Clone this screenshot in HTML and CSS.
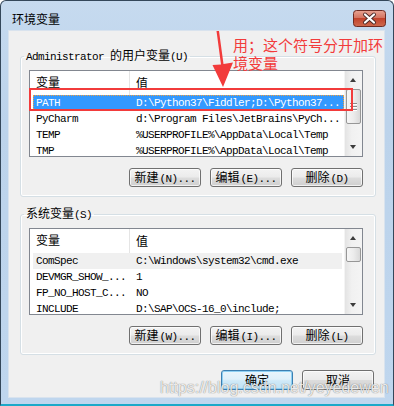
FILE: index.html
```html
<!DOCTYPE html>
<html lang="zh-CN">
<head>
    <meta charset="UTF-8">
    <title>环境变量</title>
    <link rel="stylesheet" href="styles.css">
</head>
<body>

    <div class="window">
        <!-- title bar -->
        <div class="titlebar">
            <span class="title">环境变量</span>
            <button class="close">
                <svg width="33" height="17" viewBox="0 0 33 17">
                    <defs>
                        <linearGradient id="closeBg" x1="0" y1="0" x2="0" y2="1">
                            <stop offset="0" stop-color="#e8a493"/>
                            <stop offset="0.5" stop-color="#d26f5c"/>
                            <stop offset="0.5" stop-color="#c2432c"/>
                            <stop offset="1" stop-color="#cf6a4e"/>
                        </linearGradient>
                    </defs>
                    <rect x="0.5" y="0.5" width="32" height="16" rx="3" fill="url(#closeBg)" stroke="#6d2b22"/>
                    <path d="M12 4.5 L21 12.5 M21 4.5 L12 12.5" stroke="#4a2a28" stroke-width="4" stroke-linecap="round"/>
                    <path d="M12 4.5 L21 12.5 M21 4.5 L12 12.5" stroke="#ffffff" stroke-width="2.2" stroke-linecap="round"/>
                </svg>
            </button>
        </div>

        <div class="client">
            <!-- user variables -->
            <fieldset class="group">
                <legend><span class="mono">Administrator </span>的用户变量<span class="mono">(U)</span></legend>
                <div class="list">
                    <div class="list-body">
                        <div class="list-head"><span class="col-name">变量</span><span class="col-value">值</span></div>
                        <div class="row selected"><span class="col-name">PATH</span><span class="col-value">D:\Python37\Fiddler;D:\Python37...</span></div>
                        <div class="row"><span class="col-name">PyCharm</span><span class="col-value">d:\Program Files\JetBrains\PyCh...</span></div>
                        <div class="row"><span class="col-name">TEMP</span><span class="col-value">%USERPROFILE%\AppData\Local\Temp</span></div>
                        <div class="row"><span class="col-name">TMP</span><span class="col-value">%USERPROFILE%\AppData\Local\Temp</span></div>
                    </div>
                    <div class="scrollbar">
                        <span class="arrow up"></span>
                        <span class="track"><span class="thumb big"><i></i><i></i><i></i></span></span>
                        <span class="arrow down"></span>
                    </div>
                </div>
                <div class="buttons">
                    <button class="btn">新建<span class="mono">(N)...</span></button>
                    <button class="btn">编辑<span class="mono">(E)...</span></button>
                    <button class="btn">删除<span class="mono">(D)</span></button>
                </div>
            </fieldset>

            <!-- system variables -->
            <fieldset class="group second">
                <legend>系统变量<span class="mono">(S)</span></legend>
                <div class="list">
                    <div class="list-body">
                        <div class="list-head"><span class="col-name">变量</span><span class="col-value">值</span></div>
                        <div class="row inactive"><span class="col-name">ComSpec</span><span class="col-value">C:\Windows\system32\cmd.exe</span></div>
                        <div class="row"><span class="col-name">DEVMGR_SHOW_...</span><span class="col-value">1</span></div>
                        <div class="row"><span class="col-name">FP_NO_HOST_C...</span><span class="col-value">NO</span></div>
                        <div class="row"><span class="col-name">INCLUDE</span><span class="col-value">D:\SAP\OCS-16_0\include;</span></div>
                    </div>
                    <div class="scrollbar">
                        <span class="arrow up"></span>
                        <span class="track"><span class="thumb small"></span></span>
                        <span class="arrow down"></span>
                    </div>
                </div>
                <div class="buttons">
                    <button class="btn">新建<span class="mono">(W)...</span></button>
                    <button class="btn">编辑<span class="mono">(I)...</span></button>
                    <button class="btn">删除<span class="mono">(L)</span></button>
                </div>
            </fieldset>

            <div class="dialog-actions">
                <button class="btn default">确定</button>
                <button class="btn">取消</button>
            </div>
        </div>

        <!-- red annotation drawn over the screenshot -->
        <svg class="markup" width="394" height="406" viewBox="0 0 394 406">
            <rect x="30" y="89" width="322" height="21" fill="none" stroke="#f23b3b" stroke-width="2"/>
            <path d="M216.5 31 L219 31 L223.5 64 L233 62.5 L223 87 L212.5 65 L221 64.5 Z" fill="#f23b3b"/>
        </svg>
        <div class="note">用；这个符号分开加环境变量</div>
        <div class="watermark">https://blog.csdn.net/yeyedewen</div>
    </div>

</body>
</html>
```

FILE: styles.css
```css
body { margin: 0; font-family: "Noto Sans CJK SC", sans-serif; font-size: 12px; color: #000; }
.mono { font-family: "Liberation Mono", "Noto Sans CJK SC", monospace; font-size: 11px; letter-spacing: -0.6px; }

.window { position: relative; width: 394px; height: 406px; box-sizing: border-box; padding: 0 8px 6px 7px; border: 1px solid #34475a; border-bottom: 2px solid #1ca9c9; border-radius: 6px 6px 0 0; background: linear-gradient(#c6daef, #bcd3eb 30%, #bfd6ee); display: flex; flex-direction: column; }

.titlebar { height: 29px; display: flex; justify-content: space-between; align-items: flex-start; }
.title { margin: 10px 0 0 4px; line-height: 16px; font-size: 12px; color: #000; }
.close { margin: 9px -1px 0 0; padding: 0; border: 0; background: none; width: 33px; height: 17px; display: block; }
.close svg { display: block; }

.client { height: 368px; background: #f0f0f0; display: flex; flex-direction: column; box-shadow: inset 0 0 0 1px #d9e3ee; }

.group { margin: 18px 9px 0 12px; padding: 6px 12px 9px 8px; border: 1px solid #d5dfe5; border-radius: 3px; box-shadow: inset 0 0 0 1px #fff; }
.group.second { margin-top: 9px; }
.group legend { padding: 0 2px; margin-left: -5px; line-height: 14px; font-size: 12px; }

.list { width: 334px; height: 87px; box-sizing: border-box; border: 1px solid #828790; background: #fff; display: flex; overflow: hidden; }
.list-body { flex: 1; overflow: hidden; }
.list-head { height: 24px; display: flex; align-items: center; }
.list-head .col-name { width: 93px; padding-left: 6px; border-right: 1px solid #e5e5e5; height: 24px; line-height: 22px; }
.list-head .col-value { padding-left: 6px; line-height: 22px; }

.row { height: 16px; line-height: 16px; margin: 0 2px 0 3px; padding-left: 3px; display: flex; white-space: nowrap; font-family: "Liberation Mono", monospace; font-size: 11px; letter-spacing: -0.6px; box-sizing: border-box; }
.row .col-name { width: 100px; flex: none; }
.row.selected { background: #3399ff; color: #fff; border: 1px dotted #f0a040; margin-right: 0; padding-left: 2px; line-height: 14px; }
.row.inactive { background: #f0f0f0; }

.scrollbar { width: 17px; flex: none; display: flex; flex-direction: column; background: linear-gradient(to right, #e3e3e3, #f1f1f1 40%, #f4f4f4); border-left: 1px solid #f4f4f4; }
.arrow { height: 17px; flex: none; position: relative; }
.arrow::after { content: ""; position: absolute; left: 5px; top: 7px; border-left: 3.5px solid transparent; border-right: 3.5px solid transparent; }
.arrow.up::after { border-bottom: 4px solid #3c3c3c; }
.arrow.down::after { border-top: 4px solid #3c3c3c; top: 6px; }
.track { flex: 1; padding-top: 1px; }
.thumb { display: flex; flex-direction: column; justify-content: center; align-items: center; gap: 2px; margin: 0 1px; box-sizing: border-box; border: 1px solid #979797; border-radius: 2px; background: linear-gradient(to right, #f6f6f6, #ececec 50%, #d9d9d9); }
.thumb.big { height: 35px; }
.thumb.small { height: 15px; }
.thumb i { display: block; width: 7px; height: 1px; background: #8a8a8a; box-shadow: 0 1px 0 #fff; }

.buttons { margin-top: 11px; display: flex; justify-content: flex-end; gap: 9px; padding-right: 0; }
.btn { width: 72px; height: 19px; padding: 0; box-sizing: border-box; border: 1px solid #707070; border-radius: 3px; background: linear-gradient(#f3f3f3, #ebebeb 48%, #dddddd 52%, #cfcfcf); box-shadow: inset 0 0 0 1px rgba(255, 255, 255, 0.7); font-family: "Noto Sans CJK SC", sans-serif; font-size: 12px; line-height: 16px; color: #000; }
.btn .mono { margin-left: 1px; }

.dialog-actions { margin-top: 15px; padding-right: 11px; display: flex; justify-content: flex-end; gap: 9px; }
.dialog-actions .btn { height: 20px; }
.btn.default { border-color: #3c7fb1; background: linear-gradient(#e8f5fc, #dff0fa 45%, #cfe9f7 55%, #bfe2f5); box-shadow: inset 0 0 0 1px #8fd0f3; }

.markup { position: absolute; left: -1px; top: -1px; pointer-events: none; }
.note { position: absolute; left: 232px; top: 35px; width: 152px; font-size: 15px; line-height: 18px; color: #f23b3b; }
.watermark { position: absolute; left: 159px; top: 378px; font-family: "Liberation Sans", sans-serif; font-size: 16px; color: rgba(255, 255, 255, 0.85); text-shadow: 0 0 1px rgba(70, 70, 70, 0.55), 0 0 1px rgba(70, 70, 70, 0.4); white-space: nowrap; }
```
